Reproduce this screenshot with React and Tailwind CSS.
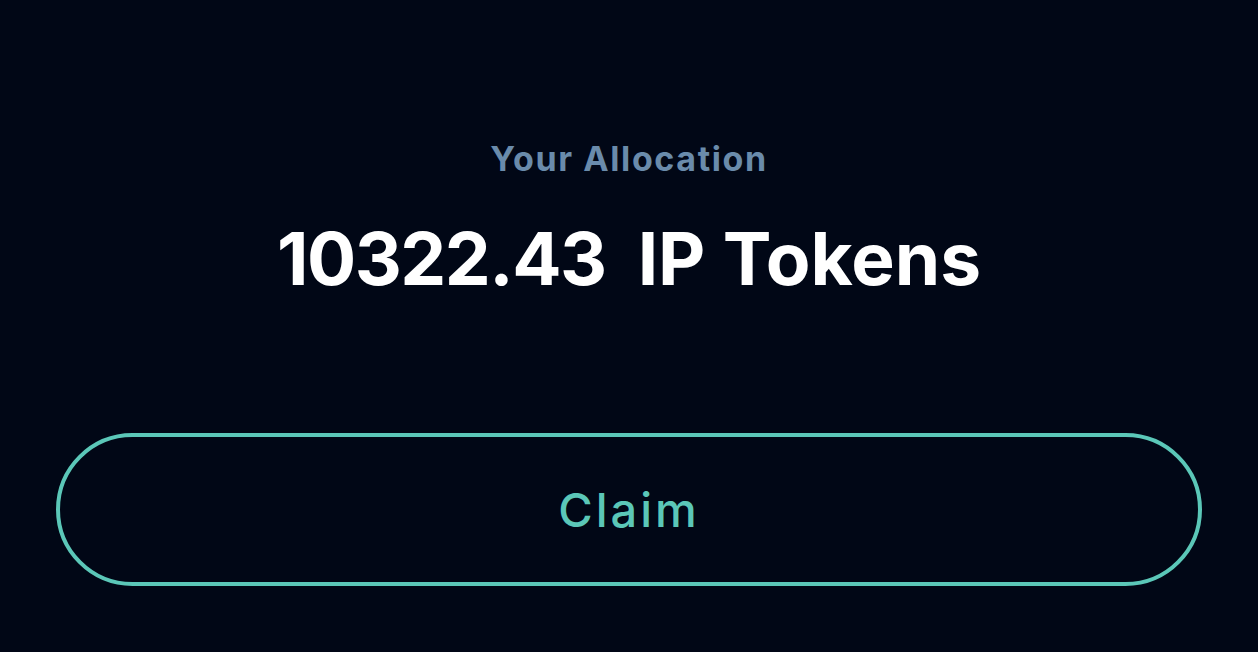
export default function App() {
  return (
    <div
      className="w-[1258px] h-[652px] bg-[#010716] flex flex-col items-center px-[56px] pt-[142px]"
      style={{ fontFamily: 'Inter, "Liberation Sans", Arial, sans-serif' }}
    >
      <div className="text-[34px] leading-none font-bold tracking-[1.6px] text-[#6a8bab]">Your Allocation</div>
      <div className="mt-[46px] text-[73px] leading-none font-bold text-white whitespace-nowrap">
        <span className="tracking-[-1.5px]">10322.43</span>
        <span className="ml-[32px]">IP Tokens</span>
      </div>
      <button className="mt-[138px] w-full h-[153px] rounded-full border-[4px] border-[#5bc7b8] text-[#5bc7b8] text-[47px] font-medium tracking-[3px] leading-none">
        Claim
      </button>
    </div>
  );
}
